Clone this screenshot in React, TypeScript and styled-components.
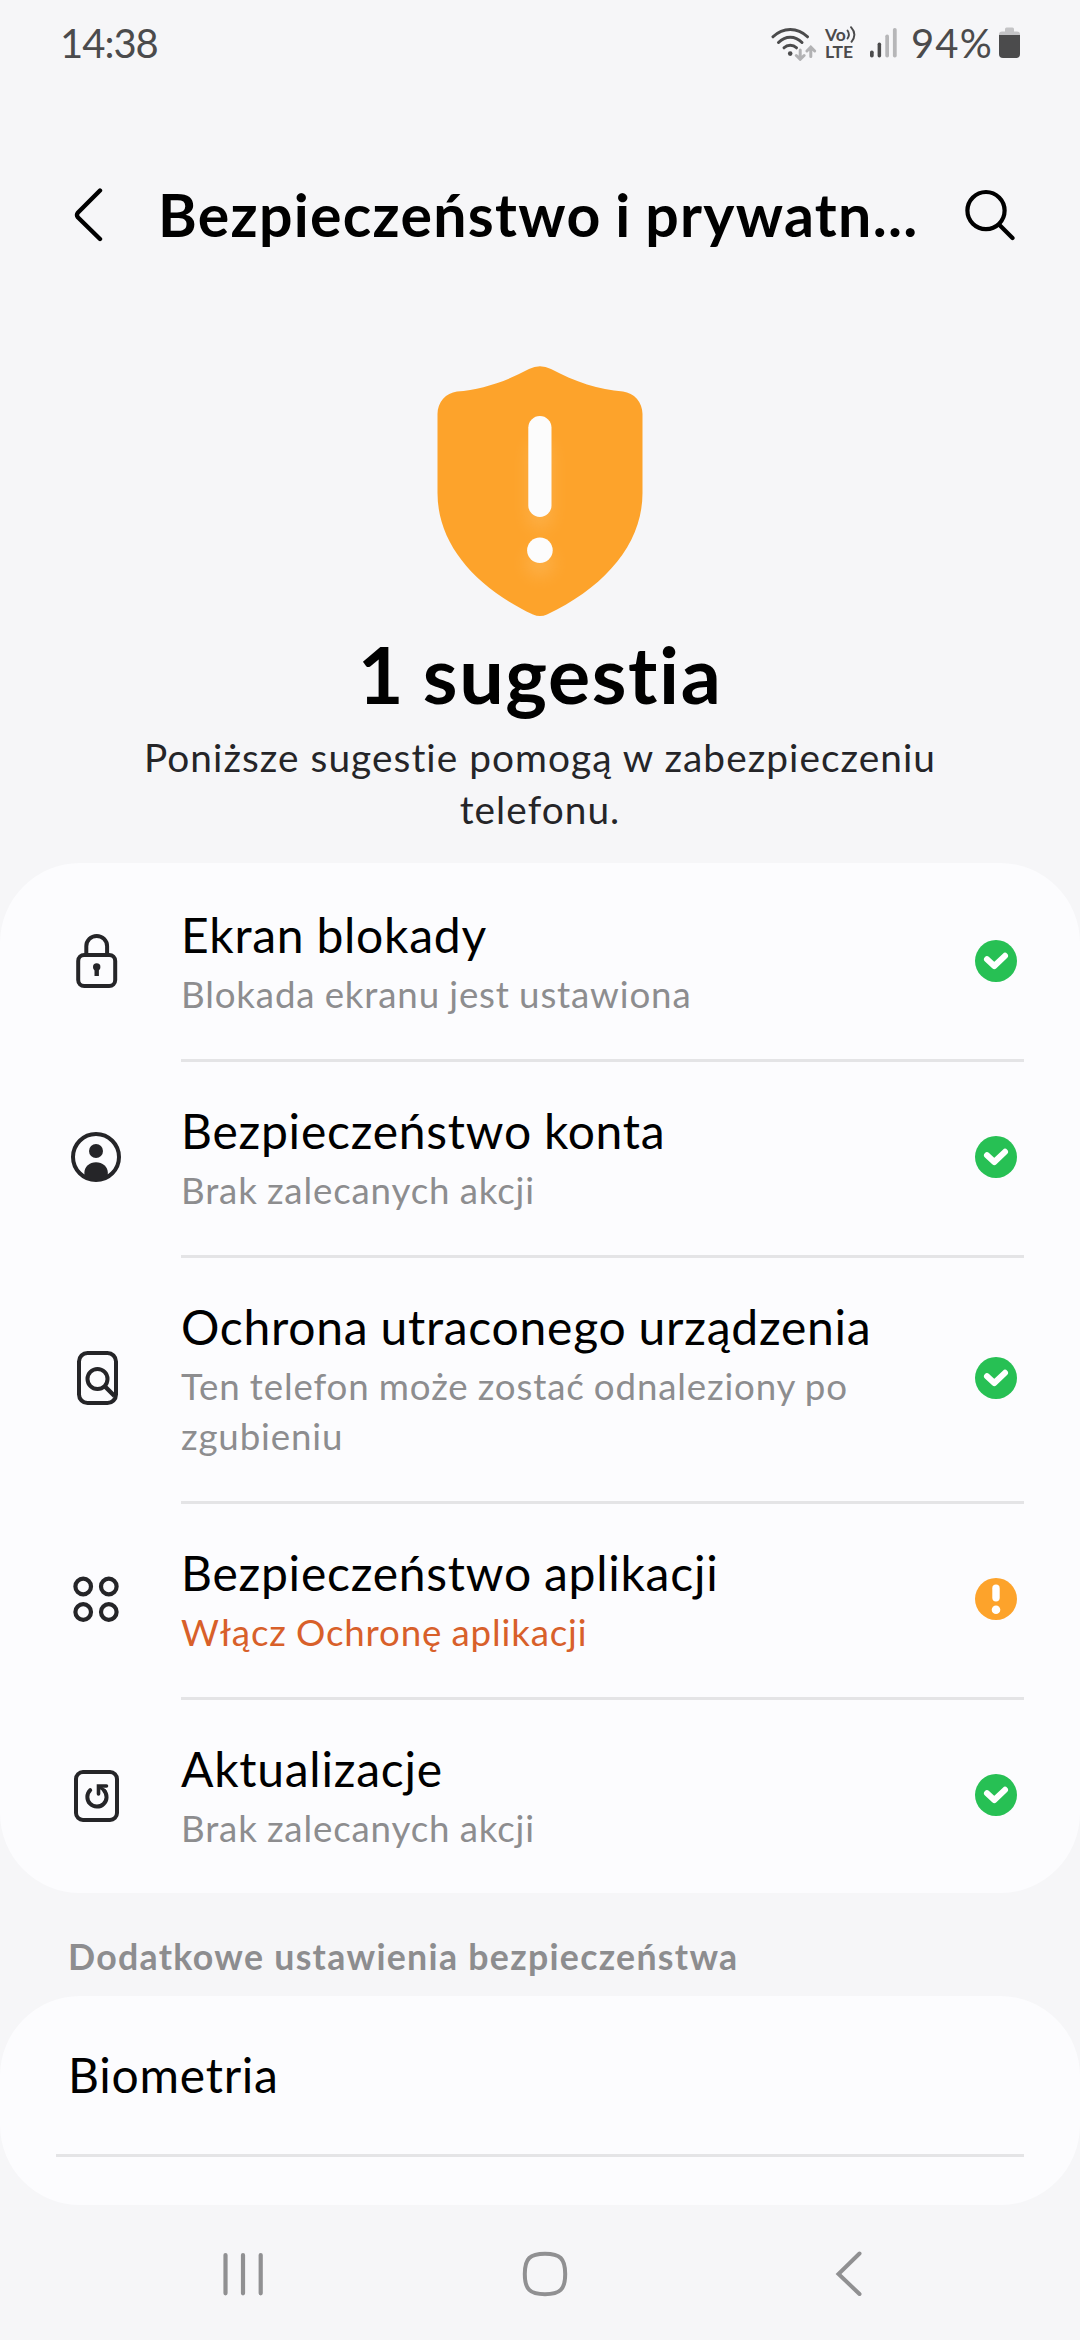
import React from "react";
import styled, { createGlobalStyle } from "styled-components";

const GlobalStyle = createGlobalStyle`
  *, *::before, *::after { box-sizing: border-box; }
  body {
    margin: 0;
    background: #f6f6f8;
    font-family: Lato, "Open Sans", sans-serif;
    font-variant-ligatures: none;
    color: #000;
  }
  svg { display: block; flex: none; }
`;

const Screen = styled.div`
  width: 1080px;
  height: 2340px;
  display: flex;
  flex-direction: column;
  overflow: hidden;
  background: #f6f6f8;
`;

const StatusBar = styled.header`
  height: 86px;
  padding: 0 59px 0 60px;
  display: flex;
  justify-content: space-between;
  align-items: center;
  color: #4b4b4c;
`;

const Clock = styled.span`
  font-size: 40px;
  line-height: 48px;
  letter-spacing: -1px;
`;

const BatteryLevel = styled.span`
  margin: 0 6px 0 14px;
  font-size: 40px;
  line-height: 48px;
  letter-spacing: 1.2px;
`;

const StatusIcons = styled.div`
  display: flex;
  align-items: center;
`;

const Volte = styled.div`
  width: 31px;
  margin: 0 14px 0 8px;
  display: flex;
  flex-direction: column;
  font-size: 17.5px;
  font-weight: 700;
  line-height: 17px;
`;

const VolteTop = styled.div`
  display: flex;
  align-items: center;
`;

const TitleBar = styled.div`
  height: 86px;
  margin-top: 86px;
  padding: 0 65px 0 74px;
  display: flex;
  align-items: center;
`;

const Title = styled.h1`
  flex: 1;
  margin: 0 0 0 55px;
  font-size: 59px;
  font-weight: 700;
  line-height: 86px;
  letter-spacing: 1.3px;
  word-spacing: -2px;
  white-space: nowrap;
`;

const Hero = styled.section`
  padding: 108px 100px 28px;
  display: flex;
  flex-direction: column;
  align-items: center;
  text-align: center;
`;

const HeroHeading = styled.h2`
  margin: 11px 0 10px;
  font-size: 79px;
  font-weight: 700;
  line-height: 94px;
  letter-spacing: 1.6px;
  word-spacing: -3px;
`;

const HeroText = styled.p`
  margin: 0;
  font-size: 38.8px;
  line-height: 52px;
  letter-spacing: 1.05px;
  color: #252528;
`;

const Card = styled.section`
  flex: none;
  background: #fcfcfe;
  border-radius: 80px;
`;

const Divider = styled.div<{ $inset: number }>`
  height: 3px;
  margin: 0 56px -3px ${(p) => p.$inset}px;
  background: #e4e4e6;
`;

const Row = styled.div`
  padding: 40px 63px 40px 66px;
  display: flex;
  align-items: center;
`;

const RowText = styled.div`
  flex: 1;
  margin-left: 55px;
  padding-top: 2px;
`;

const RowTitle = styled.div`
  font-size: 48px;
  line-height: 60px;
  letter-spacing: 0.75px;
  word-spacing: -1px;
`;

const RowSub = styled.div<{ $alert?: boolean }>`
  margin-top: 4px;
  width: 700px;
  font-size: 36.7px;
  line-height: 50px;
  letter-spacing: 0.85px;
  word-spacing: -1px;
  color: ${(p) => (p.$alert ? "#d8602a" : "#8d8d8f")};
`;

const SectionLabel = styled.h3`
  margin: 39px 0 14px 68px;
  font-size: 35.7px;
  font-weight: 700;
  line-height: 50px;
  letter-spacing: 1.3px;
  color: #8d8d8f;
`;

const PlainRow = styled.div`
  padding: 49px 68px 49px;
`;

const Spacer = styled.div`
  height: 51px;
`;

const NavBar = styled.nav`
  flex: 1;
  padding: 45px 0 0 222px;
  display: grid;
  grid-template-columns: 299px 312px 29px;
  align-items: start;
`;

const INK = "#252528";

const LockIcon = () => (
  <svg width="60" height="60" viewBox="0 0 60 60" fill="none" stroke={INK} strokeWidth="4">
    <path d="M20.3 24V15.300a10.400 10.400 0 0 1 20.800 0V24" />
    <rect x="12.200" y="24" width="37" height="31" rx="6" />
    <circle cx="30.700" cy="36" r="3.700" fill={INK} stroke="none" />
    <path d="M30.700 36v9" strokeWidth="4.400" />
  </svg>
);

const AccountIcon = () => (
  <svg width="60" height="60" viewBox="0 0 60 60">
    <circle cx="30" cy="30" r="23" fill="none" stroke={INK} strokeWidth="4" />
    <circle cx="30" cy="24" r="7" fill={INK} />
    <path d="M18.400 49V45.500C18.400 40 23.500 35.300 30 35.300S41.800 40 41.800 45.500V49C38 52.500 34 54 30 54S22 52.500 18.400 49Z" fill={INK} />
  </svg>
);

const FindDeviceIcon = () => (
  <svg width="60" height="60" viewBox="0 0 60 60" fill="none" stroke={INK} strokeWidth="4">
    <rect x="13" y="5" width="37" height="50" rx="8.500" />
    <circle cx="31.500" cy="31" r="10" />
    <path d="M38.500 38L48.500 48" strokeWidth="4.400" />
  </svg>
);

const AppsIcon = () => (
  <svg width="60" height="60" viewBox="0 0 60 60" fill="none" stroke={INK} strokeWidth="4.200">
    <circle cx="17.200" cy="17.500" r="7.800" />
    <circle cx="42.800" cy="17.500" r="7.800" />
    <circle cx="17.200" cy="43" r="7.800" />
    <circle cx="42.800" cy="43" r="7.800" />
  </svg>
);

const UpdateIcon = () => (
  <svg width="60" height="60" viewBox="0 0 60 60" fill="none" stroke={INK} strokeWidth="4" strokeLinecap="round">
    <rect x="10" y="7" width="41" height="48" rx="7" />
    <path d="M24.200 25.200A9.600 9.600 0 1 0 38 25.500" />
    <path d="M32.500 29V21H40.500" strokeWidth="3.600" strokeLinejoin="miter" />
    <path d="M33 21.500L39 26" strokeWidth="3" />
  </svg>
);

const OkBadge = () => (
  <svg width="42" height="42" viewBox="0 0 42 42">
    <circle cx="21" cy="21" r="21" fill="#27c054" />
    <path d="M12 19.300L19.300 26L30 15.800" fill="none" stroke="#fff" strokeWidth="6" strokeLinecap="round" strokeLinejoin="round" />
  </svg>
);

const AlertBadge = () => (
  <svg width="42" height="42" viewBox="0 0 42 42">
    <circle cx="21" cy="21" r="21" fill="#fda32b" />
    <rect x="17.300" y="6.500" width="7.400" height="17" rx="3.700" fill="#fff" />
    <circle cx="21" cy="31.700" r="4.300" fill="#fff" />
  </svg>
);

const ShieldIcon = () => (
  <svg width="206" height="250" viewBox="0 0 206 250">
    <defs>
      <filter id="glow" x="-200%" y="-50%" width="500%" height="200%">
        <feGaussianBlur stdDeviation="8" />
      </filter>
    </defs>
    <path
      d="M92 3Q103 -2.500 114 3C138 16 162 23.500 186 25.500C197 27 205.500 36 205.500 48V127C205.500 178 168 221 110 248.500Q103 251.500 96 248.500C38 221 0.500 178 0.500 127V48C0.500 36 9 27 20 25.500C44 23.500 68 16 92 3Z"
      fill="#fda32b"
    />
    <g fill="#fbd9a4" opacity="0.220" filter="url(#glow)">
      <rect x="91" y="75" width="24" height="88" rx="12" />
      <circle cx="103" cy="197" r="14" />
    </g>
    <rect x="91.300" y="50" width="23.200" height="101" rx="11.600" fill="#fcfcfc" />
    <circle cx="102.900" cy="184.300" r="12.800" fill="#fcfcfc" />
  </svg>
);

const WifiIcon = () => (
  <svg width="46" height="36" viewBox="0 0 46 36" fill="none" stroke="#4b4b4c" strokeWidth="3" strokeLinecap="round">
    <path d="M2 11.800C12 2 26.500 2 36.500 11.800" />
    <path d="M7.500 17.500C14.500 10.500 24 10.500 31 17.500" />
    <path d="M13 22.800C16.500 19.300 22 19.300 25.500 22.800" />
    <circle cx="19.200" cy="28.600" r="2.300" fill="#4b4b4c" stroke="none" />
    <g stroke="#b2b2b4">
      <path d="M29.200 25V34M25.300 30.500L29.200 34.300L33.100 30.500" />
      <path d="M39.800 31.500V22.500M35.900 26L39.800 22.200L43.700 26" />
    </g>
  </svg>
);

const CallWaves = () => (
  <svg width="10" height="17" viewBox="0 0 10 17" fill="none" stroke="#4b4b4c" strokeWidth="1.900" strokeLinecap="round">
    <path d="M1.500 4.500Q4.300 8.500 1.500 12.500" />
    <path d="M5 1.200Q11.500 8.500 5.500 15.800" />
  </svg>
);

const SignalIcon = () => (
  <svg width="27" height="30" viewBox="0 0 27 30">
    <rect x="0" y="22.500" width="3.700" height="7" rx="1.800" fill="#4b4b4c" />
    <rect x="7.600" y="14.500" width="3.500" height="15" rx="1.700" fill="#4b4b4c" />
    <rect x="15.300" y="6.500" width="3.700" height="23" rx="1.800" fill="#b6b6b8" />
    <rect x="22.900" y="0" width="3.800" height="29.500" rx="1.800" fill="#b6b6b8" />
  </svg>
);

const BatteryIcon = () => (
  <svg width="22" height="32" viewBox="0 0 22 32">
    <path d="M6 2Q6 0.500 7.500 0.500H13.500Q15 0.500 15 2V4.500H18Q21 4.500 21 7.500V9H0V7.500Q0 4.500 3 4.500H6Z" fill="#c4c4c6" />
    <path d="M0 8H21V27Q21 31 17 31H4Q0 31 0 27Z" fill="#4b4b4c" />
  </svg>
);

const BackIcon = () => (
  <svg width="29" height="56" viewBox="0 0 29 56" fill="none" stroke="#000" strokeWidth="4.400" strokeLinecap="round" strokeLinejoin="round">
    <path d="M26 3.500L3.800 25.800Q2.200 28 3.800 30.200L26 52" />
  </svg>
);

const SearchIcon = () => (
  <svg width="50" height="52" viewBox="0 0 50 52" fill="none" stroke="#000" strokeWidth="4.200" strokeLinecap="round">
    <circle cx="21" cy="21.600" r="18.600" />
    <path d="M34.500 36L47.500 49" />
  </svg>
);

const RecentsIcon = () => (
  <svg width="42" height="48" viewBox="0 0 42 48" stroke="#909092" strokeWidth="4.200" strokeLinecap="round">
    <path d="M3.500 5V43.300M21 5V43.300M38.700 5V43.300" />
  </svg>
);

const HomeIcon = () => (
  <svg width="48" height="48" viewBox="0 0 48 48" fill="none" stroke="#909092" strokeWidth="4">
    <path d="M24 3.700C39 3.700 44.200 8.500 44.200 24S39 44.200 24 44.200S3.800 39.500 3.800 24S9 3.700 24 3.700Z" />
  </svg>
);

const NavBackIcon = () => (
  <svg width="29" height="48" viewBox="0 0 29 48" fill="none" stroke="#909092" strokeWidth="4" strokeLinecap="round">
    <path d="M26.500 3.500L5.500 24L26.500 44" />
  </svg>
);

type Item = {
  icon: React.ReactNode;
  title: string;
  sub: string;
  alert?: boolean;
};

const items: Item[] = [
  { icon: <LockIcon />, title: "Ekran blokady", sub: "Blokada ekranu jest ustawiona" },
  { icon: <AccountIcon />, title: "Bezpieczeństwo konta", sub: "Brak zalecanych akcji" },
  { icon: <FindDeviceIcon />, title: "Ochrona utraconego urządzenia", sub: "Ten telefon może zostać odnaleziony po zgubieniu" },
  { icon: <AppsIcon />, title: "Bezpieczeństwo aplikacji", sub: "Włącz Ochronę aplikacji", alert: true },
  { icon: <UpdateIcon />, title: "Aktualizacje", sub: "Brak zalecanych akcji" },
];

export default function App() {
  return (
    <>
      <GlobalStyle />
      <Screen>
        <StatusBar>
          <Clock>14:38</Clock>
          <StatusIcons>
            <WifiIcon />
            <Volte>
              <VolteTop>
                Vo
                <CallWaves />
              </VolteTop>
              <span>LTE</span>
            </Volte>
            <SignalIcon />
            <BatteryLevel>94%</BatteryLevel>
            <BatteryIcon />
          </StatusIcons>
        </StatusBar>
        <TitleBar>
          <BackIcon />
          <Title>Bezpieczeństwo i prywatn...</Title>
          <SearchIcon />
        </TitleBar>
        <Hero>
          <ShieldIcon />
          <HeroHeading>1 sugestia</HeroHeading>
          <HeroText>Poniższe sugestie pomogą w zabezpieczeniu telefonu.</HeroText>
        </Hero>
        <Card>
          {items.map((item, i) => (
            <React.Fragment key={item.title}>
              {i > 0 && <Divider $inset={181} />}
              <Row>
                {item.icon}
                <RowText>
                  <RowTitle>{item.title}</RowTitle>
                  <RowSub $alert={item.alert}>{item.sub}</RowSub>
                </RowText>
                {item.alert ? <AlertBadge /> : <OkBadge />}
              </Row>
            </React.Fragment>
          ))}
        </Card>
        <SectionLabel>Dodatkowe ustawienia bezpieczeństwa</SectionLabel>
        <Card>
          <PlainRow>
            <RowTitle>Biometria</RowTitle>
          </PlainRow>
          <Divider $inset={56} />
          <Spacer />
        </Card>
        <NavBar>
          <RecentsIcon />
          <HomeIcon />
          <NavBackIcon />
        </NavBar>
      </Screen>
    </>
  );
}
